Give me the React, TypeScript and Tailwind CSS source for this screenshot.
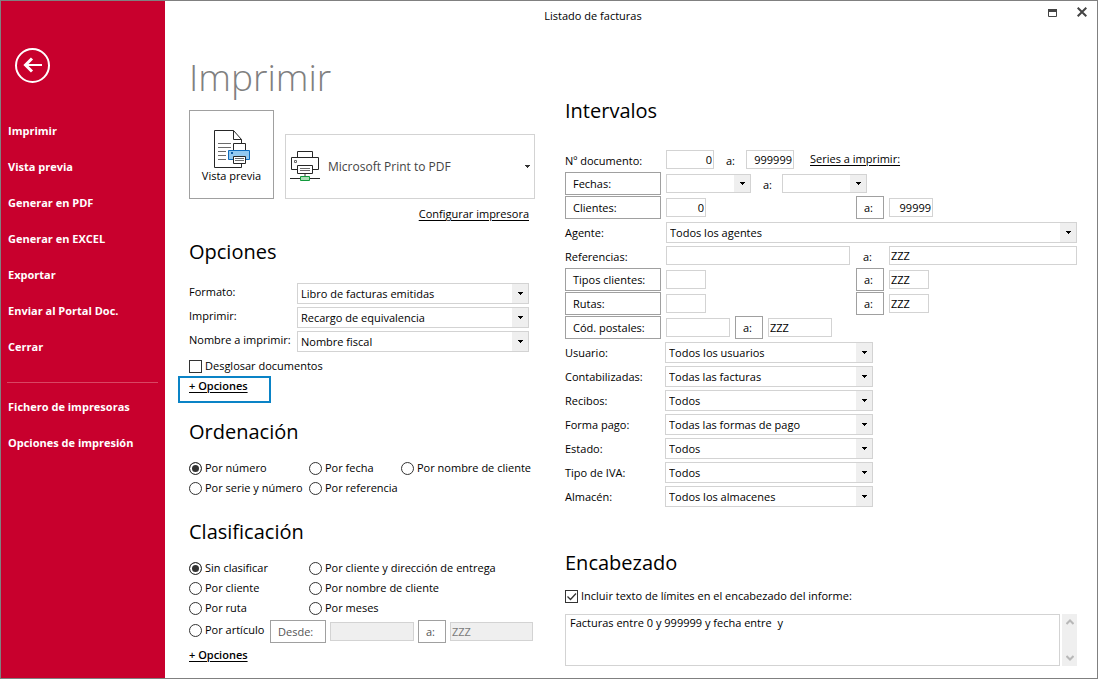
import React, { useId } from 'react';

const box = 'border border-[#d3d3d3] bg-white text-[11px] text-black outline-none';

function Heading({ children, className = '' }: { children: React.ReactNode; className?: string }) {
  return <h2 className={`text-[20px] leading-7 text-black ${className}`}>{children}</h2>;
}

function Select({ id, label, value, className = '', height = 'h-[21px]' }: { id?: string; label?: string; value: string; className?: string; height?: string }) {
  return (
    <span className={`relative mt-0.5 flex ${height} ${className}`}>
      <select id={id} aria-label={label} defaultValue={value} className={`${box} w-full appearance-none rounded-none pr-5 pl-[3px]`}>
        <option value={value}>{value}</option>
      </select>
      <span className="pointer-events-none absolute inset-y-px right-px flex w-4 items-center justify-center bg-[#efefef]">
        <svg width="5" height="3" viewBox="0 0 5 3" aria-hidden="true">
          <path d="M0 0h5v1h-1v1h-1v1h-1v-1h-1v-1h-1z" fill="#000" />
        </svg>
      </span>
    </span>
  );
}

function Text({ id, label, value = '', className = '', disabled = false }: { id?: string; label?: string; value?: string; className?: string; disabled?: boolean }) {
  return (
    <input
      id={id}
      aria-label={label}
      type="text"
      defaultValue={value}
      disabled={disabled}
      className={`mt-0.5 h-[19px] min-w-0 border border-[#d3d3d3] px-px text-[11px] outline-none disabled:bg-[#efefef] disabled:text-[#7a7a7a] ${className}`}
    />
  );
}

function PushButton({ children, className = '' }: { children: React.ReactNode; className?: string }) {
  return (
    <button type="button" className={`h-[23px] shrink-0 border border-[#a0a0a0] bg-white pl-[7px] text-left ${className}`}>
      {children}
    </button>
  );
}

function RowLabel({ htmlFor, children }: { htmlFor: string; children: React.ReactNode }) {
  return (
    <label htmlFor={htmlFor} className="mt-0.5 w-24 shrink-0 leading-[22px]">
      {children}
    </label>
  );
}

function Row({ children, className = 'gap-[5px]' }: { children: React.ReactNode; className?: string }) {
  return <div className={`flex h-6 items-start ${className}`}>{children}</div>;
}

function To({ className }: { className: string }) {
  return <span className={`mt-0.5 shrink-0 pl-[7px] leading-[22px] ${className}`}>a:</span>;
}

function Radio({ name, label, checked = false }: { name: string; label: string; checked?: boolean }) {
  return (
    <label className="flex h-5 items-center gap-[3px] whitespace-nowrap">
      <input
        type="radio"
        name={name}
        defaultChecked={checked}
        className="size-[13px] shrink-0 appearance-none rounded-full border border-[#333] bg-white checked:bg-[#333] checked:shadow-[inset_0_0_0_2px_white]"
      />
      {label}
    </label>
  );
}

function Check({ label, checked = false }: { label: string; checked?: boolean }) {
  return (
    <label className="flex h-5 items-center gap-[3px] whitespace-nowrap">
      <span className="relative flex size-[13px] shrink-0">
        <input type="checkbox" defaultChecked={checked} className="peer size-[13px] appearance-none border border-[#333] bg-white" />
        <svg viewBox="0 0 13 13" className="pointer-events-none absolute inset-0 hidden peer-checked:block" aria-hidden="true">
          <path d="M2.5 6.5l3 3 5.5-6" fill="none" stroke="#333" strokeWidth="1.3" />
        </svg>
      </span>
      {label}
    </label>
  );
}

function OptionRow({ label, value }: { label: string; value: string }) {
  const id = useId();
  return (
    <div className="flex h-6 items-start">
      <label htmlFor={id} className="w-[108px] shrink-0 leading-[22px] whitespace-nowrap">
        {label}
      </label>
      <Select id={id} value={value} className="w-[232px]" />
    </div>
  );
}

function FilterRow({ label, value }: { label: string; value: string }) {
  const id = useId();
  return (
    <Row className="gap-1">
      <RowLabel htmlFor={id}>{label}</RowLabel>
      <Select id={id} value={value} className="w-[208px]" />
    </Row>
  );
}

function PreviewIcon() {
  return (
    <svg width="36" height="38" viewBox="0 0 36 38" fill="none" aria-hidden="true">
      <path d="M19.5.5H.5v37h27V9.500z" fill="#fff" stroke="#262626" />
      <path d="M19.500.5v9h8" stroke="#262626" />
      <path d="M4 13.500h13M4 17.500h13M4 21.500h8M4 25.500h8M4 29.500h8" stroke="#6b6b6b" />
      <path d="M19.500 13.500h12v7h-12z" fill="#fff" stroke="#262626" />
      <path d="M14.500 20.500h21v9h-21z" fill="#93c9f0" stroke="#0f6cbd" />
      <path d="M17 22h2v2h-2z" fill="#0f5ea8" />
      <path d="M19.500 26.500h12v7h-12z" fill="#fff" stroke="#262626" />
      <path d="M21 28.500h9M21 30.500h9" stroke="#6b6b6b" />
    </svg>
  );
}

function PrinterIcon() {
  return (
    <svg width="30" height="31" viewBox="0 0 30 31" fill="none" aria-hidden="true">
      <path d="M7.500.5h15v6h-15z" fill="#fff" stroke="#262626" />
      <path d="M1.500 6.500h27v12h-27z" fill="#fff" stroke="#262626" />
      <path d="M4.500 9.500h2v2h-2z" stroke="#6b6b6b" />
      <path d="M7.500 14.500h15v8h-15z" fill="#fff" stroke="#262626" />
      <path d="M10 17.500h10M10 19.500h10" stroke="#6b6b6b" />
      <path d="M15 23v3" stroke="#9a9a9a" strokeWidth="2" />
      <path d="M0 27.500h10M20 27.500h10" stroke="#262626" />
      <path d="M10.500 25.500h9v4h-9z" fill="#a9dfb5" stroke="#129a3c" />
    </svg>
  );
}

function Chevron({ d }: { d: string }) {
  return (
    <svg width="8" height="6" viewBox="0 0 8 6" fill="none" aria-hidden="true">
      <path d={d} stroke="#b8b8b8" strokeWidth="2" />
    </svg>
  );
}

const actions = ['Imprimir', 'Vista previa', 'Generar en PDF', 'Generar en EXCEL', 'Exportar', 'Enviar al Portal Doc.', 'Cerrar'];
const tools = ['Fichero de impresoras', 'Opciones de impresión'];

const filters = [
  ['Usuario:', 'Todos los usuarios'],
  ['Contabilizadas:', 'Todas las facturas'],
  ['Recibos:', 'Todos'],
  ['Forma pago:', 'Todas las formas de pago'],
  ['Estado:', 'Todos'],
  ['Tipo de IVA:', 'Todos'],
  ['Almacén:', 'Todos los almacenes'],
];

function NavItem({ label }: { label: string }) {
  return (
    <li>
      <a href="#" className="flex h-9 items-center pl-[7px] whitespace-nowrap">
        {label}
      </a>
    </li>
  );
}

function Sidebar() {
  return (
    <nav className="w-[164px] shrink-0 bg-[#c8002d] pt-[46px] text-[11px] font-bold text-white">
      <button type="button" aria-label="Volver" className="ml-3.5 block size-9">
        <svg width="36" height="36" viewBox="0 0 36 36" fill="none" stroke="#fff" aria-hidden="true">
          <circle cx="17.500" cy="18.500" r="16.500" strokeWidth="2" />
          <path d="M27 18H10.500" strokeWidth="2" />
          <path d="M17 11.500L10.500 18l6.500 6.500" strokeWidth="3" />
        </svg>
      </button>
      <ul className="mt-[30px]">
        {actions.map((label) => (
          <NavItem key={label} label={label} />
        ))}
      </ul>
      <hr className="mr-[7px] ml-1.5 mt-[17px] mb-1.5 border-[#d94663]" />
      <ul>
        {tools.map((label) => (
          <NavItem key={label} label={label} />
        ))}
      </ul>
    </nav>
  );
}

function PrintColumn() {
  return (
    <div className="w-[346px] shrink-0">
      <h1 className="text-[37px] leading-[46px] font-light text-[#808080]">Imprimir</h1>
      <div className="mt-2.5 flex items-end justify-between">
        <button type="button" className="flex h-[89px] w-[85px] flex-col items-center justify-center border border-[#a0a0a0] bg-white pt-1">
          <PreviewIcon />
          <span className="leading-4">Vista previa</span>
        </button>
        <label className="relative flex h-[65px] w-[250px]">
          <select
            aria-label="Impresora"
            defaultValue="Microsoft Print to PDF"
            className="w-full appearance-none rounded-none border border-[#d3d3d3] bg-white pl-[42px] text-[12px] text-[#444] outline-none"
          >
            <option>Microsoft Print to PDF</option>
          </select>
          <span className="pointer-events-none absolute inset-y-0 left-[5px] flex items-center">
            <PrinterIcon />
          </span>
          <span className="pointer-events-none absolute inset-y-0 right-[5px] flex items-center">
            <svg width="5" height="3" viewBox="0 0 5 3" aria-hidden="true">
              <path d="M0 0h5v1h-1v1h-1v1h-1v-1h-1v-1h-1z" fill="#333" />
            </svg>
          </span>
        </label>
      </div>
      <div className="mt-1.5 flex justify-end pr-1.5">
        <a href="#" className="leading-[18px] underline underline-offset-2">
          Configurar impresora
        </a>
      </div>

      <Heading className="mt-[15px]">Opciones</Heading>
      <div className="mt-[15px]">
        <OptionRow label="Formato:" value="Libro de facturas emitidas" />
        <OptionRow label="Imprimir:" value="Recargo de equivalencia" />
        <OptionRow label="Nombre a imprimir:" value="Nombre fiscal" />
      </div>
      <div className="mt-[3px]">
        <Check label="Desglosar documentos" />
      </div>
      <a href="#" className="-ml-[11px] flex h-[27px] w-[93px] border-2 border-[#0a83c6] pl-[9px] leading-4 font-semibold underline underline-offset-2">
        + Opciones
      </a>

      <Heading className="mt-[15px]">Ordenación</Heading>
      <div className="mt-3 grid grid-cols-[120px_92px_auto]">
        <Radio name="orden" label="Por número" checked />
        <Radio name="orden" label="Por fecha" />
        <Radio name="orden" label="Por nombre de cliente" />
        <Radio name="orden" label="Por serie y número" />
        <Radio name="orden" label="Por referencia" />
      </div>

      <Heading className="mt-5">Clasificación</Heading>
      <div className="mt-3 grid grid-cols-[120px_auto]">
        <Radio name="clase" label="Sin clasificar" checked />
        <Radio name="clase" label="Por cliente y dirección de entrega" />
        <Radio name="clase" label="Por cliente" />
        <Radio name="clase" label="Por nombre de cliente" />
        <Radio name="clase" label="Por ruta" />
        <Radio name="clase" label="Por meses" />
      </div>
      <div className="mt-0.5 flex items-start gap-1">
        <div className="w-[77px] shrink-0">
          <Radio name="clase" label="Por artículo" />
        </div>
        <PushButton className="w-14 text-[#555]">Desde:</PushButton>
        <Text label="Artículo desde" disabled className="w-[84px]" />
        <PushButton className="w-7 text-[#555]">a:</PushButton>
        <Text label="Artículo hasta" value="ZZZ" disabled className="w-[83px]" />
      </div>
      <div className="mt-1 flex">
        <a href="#" className="leading-4 font-semibold underline underline-offset-2">
          + Opciones
        </a>
      </div>
    </div>
  );
}

function RangeColumn() {
  return (
    <div className="min-w-0 flex-1 pt-[43px]">
      <Heading>Intervalos</Heading>
      <div className="mt-[23px]">
        <Row>
          <RowLabel htmlFor="doc">Nº documento:</RowLabel>
          <Text id="doc" value="0" className="w-12 text-right" />
          <To className="w-[22px]" />
          <Text label="Documento hasta" value="999999" className="w-12 text-right" />
          <a href="#" className="ml-[11px] leading-[22px] whitespace-nowrap underline underline-offset-2">
            Series a imprimir:
          </a>
        </Row>
        <Row>
          <PushButton className="w-24">Fechas:</PushButton>
          <Select label="Fecha desde" value="" height="h-[19px]" className="w-[85px]" />
          <To className="w-[21px]" />
          <Select label="Fecha hasta" value="" height="h-[19px]" className="w-[85px]" />
        </Row>
        <Row>
          <PushButton className="w-24">Clientes:</PushButton>
          <div className="flex w-[185px] shrink-0">
            <Text label="Cliente desde" value="0" className="w-10 text-right" />
          </div>
          <PushButton className="w-7">a:</PushButton>
          <Text label="Cliente hasta" value="99999" className="w-11 text-right" />
        </Row>
        <Row>
          <RowLabel htmlFor="agente">Agente:</RowLabel>
          <Select id="agente" value="Todos los agentes" className="flex-1" />
        </Row>
        <Row>
          <RowLabel htmlFor="ref">Referencias:</RowLabel>
          <div className="flex w-[185px] shrink-0">
            <Text id="ref" className="w-[184px]" />
          </div>
          <To className="w-7" />
          <Text label="Referencia hasta" value="ZZZ" className="flex-1" />
        </Row>
        <Row>
          <PushButton className="w-24">Tipos clientes:</PushButton>
          <div className="flex w-[185px] shrink-0">
            <Text label="Tipo de cliente desde" className="w-10" />
          </div>
          <PushButton className="w-7">a:</PushButton>
          <Text label="Tipo de cliente hasta" value="ZZZ" className="w-10" />
        </Row>
        <Row>
          <PushButton className="w-24">Rutas:</PushButton>
          <div className="flex w-[185px] shrink-0">
            <Text label="Ruta desde" className="w-10" />
          </div>
          <PushButton className="w-7">a:</PushButton>
          <Text label="Ruta hasta" value="ZZZ" className="w-10" />
        </Row>
        <Row>
          <PushButton className="w-24">Cód. postales:</PushButton>
          <Text label="Código postal desde" className="w-16" />
          <PushButton className="w-7">a:</PushButton>
          <Text label="Código postal hasta" value="ZZZ" className="w-16" />
        </Row>
        {filters.map(([label, value]) => (
          <FilterRow key={label} label={label} value={value} />
        ))}
      </div>

      <Heading className="mt-[41px]">Encabezado</Heading>
      <div className="mt-[9px]">
        <Check label="Incluir texto de límites en el encabezado del informe:" checked />
      </div>
      <div className="mt-2 flex h-[52px] gap-0.5">
        <textarea
          aria-label="Texto del encabezado"
          defaultValue="Facturas entre 0 y 999999 y fecha entre  y"
          className={`${box} min-w-0 flex-1 resize-none overflow-hidden px-1 leading-4`}
        />
        <div className="flex w-[15px] flex-col items-center justify-between bg-[#efefef] py-[5px]">
          <Chevron d="M.5 5L4 1.500 7.500 5" />
          <Chevron d="M.5 1L4 4.500 7.500 1" />
        </div>
      </div>
    </div>
  );
}

export default function App() {
  return (
    <div className="flex min-h-screen border border-[#808080] bg-white font-['Open_Sans','Noto_Sans',sans-serif] text-[11px] leading-4 text-black">
      <Sidebar />
      <main className="flex min-w-0 flex-1 flex-col">
        <header className="flex h-[30px] items-center">
          <span className="flex-1 text-center">Listado de facturas</span>
          <div className="flex w-[76px] shrink-0 justify-end gap-5 self-start pt-1.5 pr-2.5">
            <button type="button" aria-label="Maximizar" className="flex">
              <svg width="9" height="11" viewBox="0 0 9 11" fill="none" aria-hidden="true">
                <path d="M.5 2.500h8v7H.500z" stroke="#444" />
                <path d="M0 2h9v3H0z" fill="#444" />
              </svg>
            </button>
            <button type="button" aria-label="Cerrar ventana" className="flex">
              <svg width="10" height="10" viewBox="0 0 10 10" fill="none" aria-hidden="true">
                <path d="M.7.700l8.600 8.600M9.300.700L.7 9.300" stroke="#444" strokeWidth="2" />
              </svg>
            </button>
          </div>
        </header>
        <div className="flex gap-[30px] pt-[23px] pr-5 pl-6">
          <PrintColumn />
          <RangeColumn />
        </div>
      </main>
    </div>
  );
}
